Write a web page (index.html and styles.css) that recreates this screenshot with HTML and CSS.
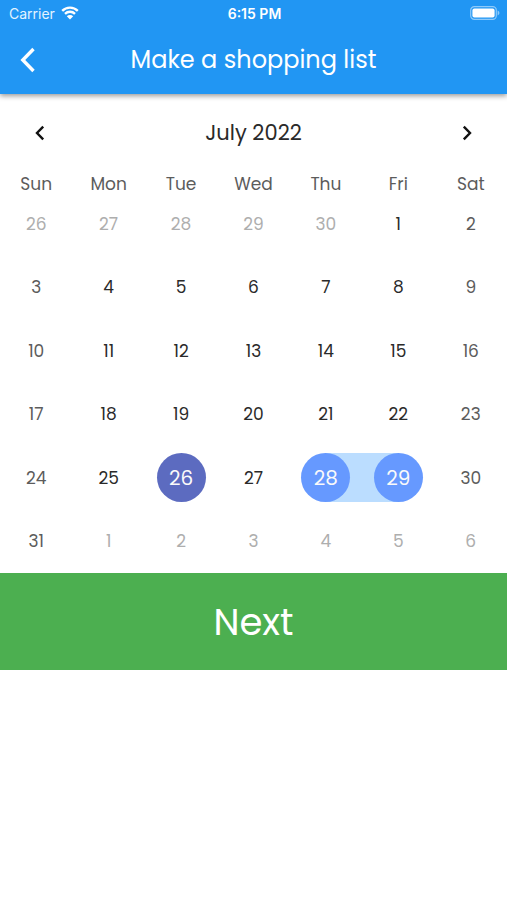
FILE: index.html
```
<!DOCTYPE html>
<html lang="en">
<head>
<meta charset="utf-8">
<meta name="viewport" content="width=device-width, initial-scale=1">
<title>Make a shopping list</title>
<link rel="stylesheet" href="styles.css">
</head>
<body>
<header class="app-bar">
  <div class="status">
    <span class="carrier">Carrier
      <svg class="wifi" viewBox="0 0 18 14" aria-hidden="true"><path d="M1.2 4.8a11.2 11.2 0 0 1 15.6 0M4 7.8a7.2 7.2 0 0 1 10 0"/><path class="solid" d="M9 13.6 5.8 10.3a4.6 4.6 0 0 1 6.4 0z"/></svg>
    </span>
    <span class="time">6:15 PM</span>
    <svg class="battery" viewBox="0 0 30 14" aria-hidden="true"><rect class="shell" x="0.7" y="0.7" width="25.6" height="12.6" rx="3.6"/><rect class="charge" x="2.4" y="2.4" width="22.2" height="9.2" rx="2"/><path class="tip" d="M27.6 4.6c2.4.8 2.4 4 0 4.8z"/></svg>
  </div>
  <div class="title-row">
    <button class="icon-button back" type="button" aria-label="Back"><svg viewBox="0 0 16 26" aria-hidden="true"><path d="M13.5 2 2.8 13l10.7 11"/></svg></button>
    <h1>Make a shopping list</h1>
  </div>
</header>
<main>
  <div class="month-row">
    <button class="icon-button step" type="button" aria-label="Previous month"><svg viewBox="0 0 10 16" aria-hidden="true"><path d="M8.2 1.6 2 8l6.2 6.4"/></svg></button>
    <h2 id="month">July 2022</h2>
    <button class="icon-button step" type="button" aria-label="Next month"><svg viewBox="0 0 10 16" aria-hidden="true"><path d="M1.8 1.6 8 8l-6.2 6.4"/></svg></button>
  </div>
  <table class="calendar" aria-labelledby="month">
    <thead>
      <tr><th>Sun</th><th>Mon</th><th>Tue</th><th>Wed</th><th>Thu</th><th>Fri</th><th>Sat</th></tr>
    </thead>
    <tbody>
      <tr><td class="outside">26</td><td class="outside">27</td><td class="outside">28</td><td class="outside">29</td><td class="outside">30</td><td>1</td><td class="weekend">2</td></tr>
      <tr><td class="weekend">3</td><td>4</td><td>5</td><td>6</td><td>7</td><td>8</td><td class="weekend">9</td></tr>
      <tr><td class="weekend">10</td><td>11</td><td>12</td><td>13</td><td>14</td><td>15</td><td class="weekend">16</td></tr>
      <tr><td class="weekend">17</td><td>18</td><td>19</td><td>20</td><td>21</td><td>22</td><td class="weekend">23</td></tr>
      <tr><td class="weekend">24</td><td>25</td><td><span class="day today">26</span></td><td>27</td><td class="range-start"><span class="day picked">28</span></td><td class="range-end"><span class="day picked">29</span></td><td class="weekend">30</td></tr>
      <tr><td class="weekend">31</td><td class="outside">1</td><td class="outside">2</td><td class="outside">3</td><td class="outside">4</td><td class="outside">5</td><td class="outside">6</td></tr>
    </tbody>
  </table>
  <button class="next" type="button">Next</button>
</main>
</body>
</html>
```
FILE: styles.css
```
* { box-sizing: border-box; }

body {
  margin: 0;
  background: #fff;
  color: #2a2a2a;
  font-family: Poppins, Inter, sans-serif;
}

button {
  border: 0;
  font-family: inherit;
  cursor: pointer;
}

h1, h2 { margin: 0; font-weight: 400; }

.app-bar {
  position: relative;
  background: #2196f3;
  color: #fff;
  box-shadow: 0 2px 5px rgba(0, 0, 0, 0.4);
}

.status {
  display: grid;
  grid-template-columns: 1fr auto 1fr;
  align-items: center;
  height: 26px;
  padding: 0 7px 0 9px;
  font-family: Inter, sans-serif;
  font-size: 14px;
}

.carrier { display: flex; align-items: center; gap: 6px; color: #e3f3ff; }
.time { font-weight: 600; }

.wifi { width: 18px; height: 14px; fill: none; stroke: #fff; stroke-width: 2.4; }
.wifi .solid { fill: #fff; stroke: none; }

.battery { justify-self: end; width: 30px; height: 14px; }
.shell { fill: none; stroke: #8ecafa; stroke-width: 1.2; }
.charge { fill: #fff; }
.tip { fill: #8ecafa; }

.title-row {
  display: grid;
  grid-template-columns: 56px 1fr 56px;
  align-items: center;
  height: 68px;
}

h1 { font-size: 24px; line-height: 32px; text-align: center; white-space: nowrap; }

.icon-button {
  display: flex;
  align-items: center;
  justify-content: center;
  height: 48px;
  padding: 0;
  background: none;
  color: inherit;
}

.icon-button svg { fill: none; stroke: currentColor; }
.back svg { width: 16px; height: 26px; stroke-width: 3.4; }
.step { width: 48px; color: #111; }
.step svg { width: 10px; height: 16px; stroke-width: 2.4; }

.month-row {
  display: flex;
  align-items: center;
  justify-content: space-between;
  height: 78px;
  padding: 0 16px;
}

h2 { font-size: 21px; line-height: 28px; }

.calendar {
  width: 100%;
  table-layout: fixed;
  border-collapse: collapse;
  text-align: center;
}

.calendar th, .calendar td { padding: 0; }

.calendar th {
  height: 20px;
  padding-top: 4px;
  color: #5c5c5c;
  font-size: 17px;
  font-weight: 400;
  line-height: 16px;
}

.calendar td { height: 63px; font-size: 17px; line-height: 24px; }
.calendar tr:nth-child(even) td { height: 64px; }
.calendar .weekend { color: #5c5c5c; }
.calendar .outside { color: #aeaeae; }

.day {
  display: grid;
  place-items: center;
  width: 49px;
  height: 49px;
  margin: 0 auto;
  border-radius: 50%;
  color: #fafafa;
  font-size: 20px;
}

.today { background: #5c6bc0; }
.picked { background: #6699ff; }

/* The band joins the centres of the two end days. */
.range-start, .range-end {
  background: linear-gradient(#bbddff, #bbddff) no-repeat;
  background-size: 50% 49px;
}
.range-start { background-position: right center; }
.range-end { background-position: left center; }

.next {
  display: block;
  width: 100%;
  height: 97px;
  padding: 0;
  background: #4caf50;
  color: #fff;
  font-size: 37px;
  line-height: 48px;
}
```
